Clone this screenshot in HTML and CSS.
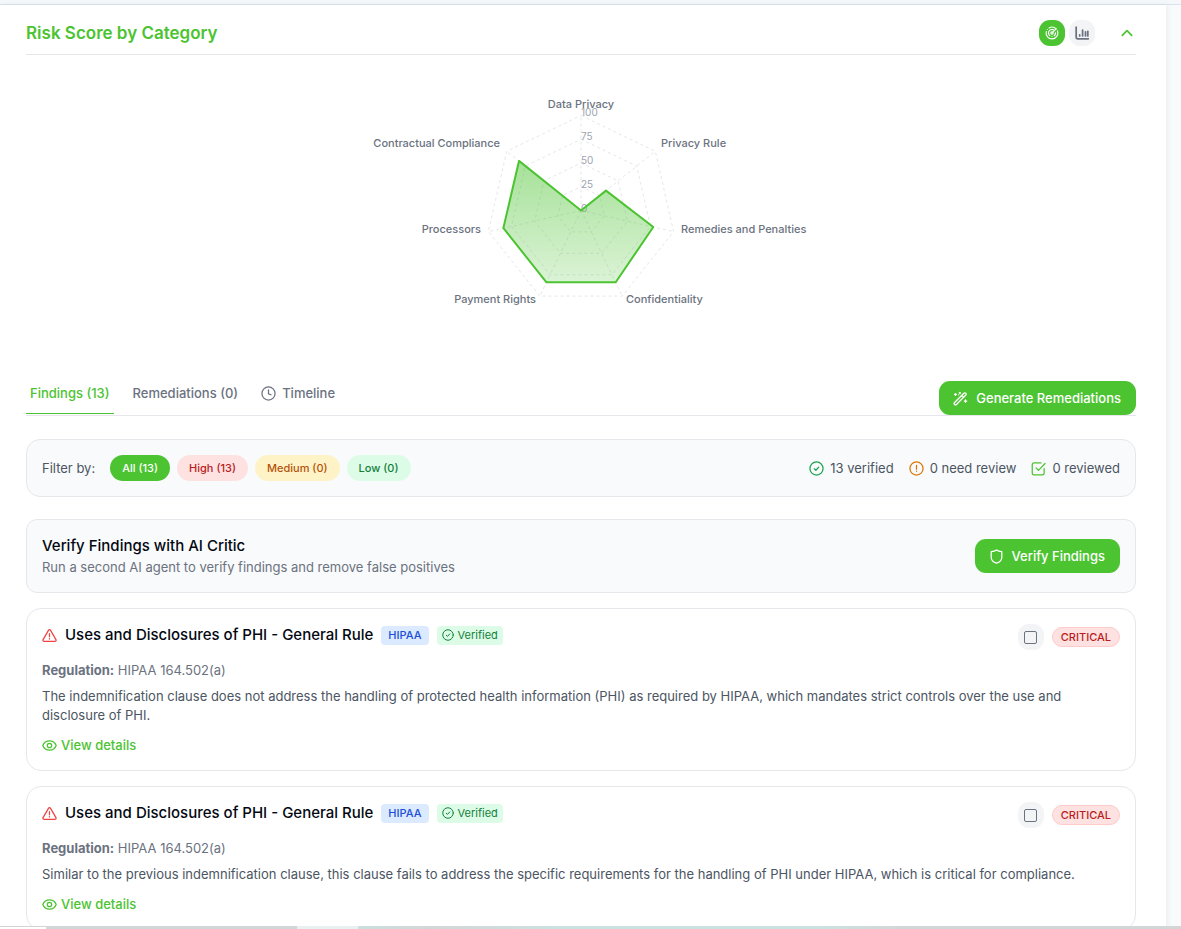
FILE: index.html
```html
<!DOCTYPE html>
<html lang="en">
<head>
<meta charset="utf-8">
<title>Risk Score by Category</title>
<link rel="stylesheet" href="styles.css">
</head>
<body>
<svg class="sprite" aria-hidden="true">
  <symbol id="check-circle" viewBox="0 0 24 24"><circle cx="12" cy="12" r="10.500"/><path d="m8.500 12.500 2.500 2.300 4.500-5"/></symbol>
  <symbol id="warning" viewBox="0 0 24 24"><path d="M10.300 3.700 1.700 18.500A2 2 0 0 0 3.400 21.500h17.200a2 2 0 0 0 1.700-3L13.700 3.700a2 2 0 0 0-3.400 0zM12 9v5M12 17v.5"/></symbol>
  <symbol id="eye" viewBox="0 0 24 24"><path d="M1.300 12C3 7.500 7 4.500 12 4.500S21 7.500 22.700 12C21 16.500 17 19.500 12 19.500S3 16.500 1.300 12z"/><circle cx="12" cy="12" r="3.500"/></symbol>
</svg>
<header class="topbar"></header>
<main class="panel">
  <section>
    <div class="section-head">
      <h2>Risk Score by Category</h2>
      <div class="head-actions">
        <button class="round active" aria-label="Radar chart"><svg class="i14" viewBox="0 0 24 24"><path d="M19.070 4.930A10 10 0 0 0 6.990 3.340M4 6h.010M2.290 9.620a10 10 0 1 0 19.020-1.270M16.240 7.760a6 6 0 1 0-8.010 8.910M12 18h.010M17.990 11.660a6 6 0 0 1-2.220 5.010"/><circle cx="12" cy="12" r="2"/><path d="m13.410 10.590 5.660-5.660"/></svg></button>
        <button class="round" aria-label="Bar chart"><svg class="i14 bold" viewBox="0 0 24 24"><path d="M2 2v17a3 3 0 0 0 3 3h18M8 17v-2M13 17V7M18 17v-7M22 17V9"/></svg></button>
        <button class="collapse" aria-label="Collapse"><svg class="i14 bold" viewBox="0 0 24 24"><path d="m4 16 8-8 8 8"/></svg></button>
      </div>
    </div>
    <svg class="radar" viewBox="0 0 480 260" role="img" aria-label="Risk score by category">
      <defs><linearGradient id="fill" x1="0" y1="0" x2="0" y2="1"><stop offset="0" stop-color="#4cc331" stop-opacity=".5"/><stop offset="1" stop-color="#4cc331" stop-opacity=".2"/></linearGradient></defs>
      <g transform="translate(240 130.500)">
        <g class="grid">
          <path d="M0-95 74.300-59.200 92.600 21.100 41.200 85.600H-41.200L-92.600 21.100-74.300-59.200Z"/>
          <path d="M0-71.300 55.700-44.400 69.500 15.900 30.900 64.200H-30.900L-69.500 15.900-55.700-44.400Z"/>
          <path d="M0-47.500 37.100-29.600 46.300 10.600 20.600 42.800H-20.600L-46.300 10.600-37.100-29.600Z"/>
          <path d="M0-23.800 18.600-14.800 23.200 5.300 10.300 21.400H-10.300L-23.200 5.300-18.600-14.800Z"/>
          <path d="M0 0V-95M0 0 74.300-59.200M0 0 92.600 21.100M0 0 41.200 85.600M0 0-41.200 85.600M0 0-92.600 21.100M0 0-74.300-59.200"/>
        </g>
        <g class="ticks"><text x="0" y="-95">100</text><text x="0" y="-71">75</text><text x="0" y="-47">50</text><text x="0" y="-23">25</text><text x="0" y="1">0</text></g>
        <path class="area" d="M0 0 25-19.900 72.300 16.500 34.700 71.700H-34.700L-77.600 17.600-62-49.600Z"/>
        <g class="cats">
          <text x="0" y="-103" text-anchor="middle">Data Privacy</text>
          <text x="80" y="-64">Privacy Rule</text>
          <text x="100" y="22">Remedies and Penalties</text>
          <text x="45" y="92">Confidentiality</text>
          <text x="-45" y="92" text-anchor="end">Payment Rights</text>
          <text x="-100" y="22" text-anchor="end">Processors</text>
          <text x="-81" y="-64" text-anchor="end">Contractual Compliance</text>
        </g>
      </g>
    </svg>
  </section>

  <nav class="tabs">
    <button class="tab selected">Findings (13)</button>
    <button class="tab">Remediations (0)</button>
    <button class="tab"><svg class="i15" viewBox="0 0 24 24"><circle cx="12" cy="12" r="10.500"/><path d="M12 6v6.500l4 1.500"/></svg>Timeline</button>
    <button class="primary generate"><svg class="i15" viewBox="0 0 24 24"><path d="m2.500 18.500 15-15a2 2 0 0 1 3 3l-15 15a2 2 0 0 1-3-3zM14 7l3 3M11 2v2M10 3h2M4 4v3M2.500 5.500h3M20 14v4M18 16h4M9 6v.1"/></svg>Generate Remediations</button>
  </nav>

  <section class="box filter">
    <span class="filter-label">Filter by:</span>
    <button class="chip all">All (13)</button>
    <button class="chip high">High (13)</button>
    <button class="chip medium">Medium (0)</button>
    <button class="chip low">Low (0)</button>
    <div class="stats">
      <span><svg class="i15 verified-ico"><use href="#check-circle"/></svg>13 verified</span>
      <span><svg class="i15 review-ico" viewBox="0 0 24 24"><circle cx="12" cy="12" r="10.500"/><path d="M12 7v6M12 16v.5"/></svg>0 need review</span>
      <span><svg class="i15 done-ico" viewBox="0 0 24 24"><path d="M16 3H5a3 3 0 0 0-3 3v13a3 3 0 0 0 3 3h13a3 3 0 0 0 3-3v-7M8 11l4 4L22.500 4"/></svg>0 reviewed</span>
    </div>
  </section>

  <section class="box critic">
    <div>
      <h3>Verify Findings with AI Critic</h3>
      <p>Run a second AI agent to verify findings and remove false positives</p>
    </div>
    <button class="primary"><svg class="i15" viewBox="0 0 24 24"><path d="M12 1.500c2.500 2 5 2.500 8.500 2.800V13c0 5-3.500 8-8.500 9.500C7 21 3.500 18 3.500 13V4.300C7 4 9.500 3.500 12 1.500z"/></svg>Verify Findings</button>
  </section>

  <article class="finding">
    <div class="finding-head">
      <div class="finding-title">
        <svg class="i15 alert"><use href="#warning"/></svg>
        <h3>Uses and Disclosures of PHI - General Rule</h3>
        <span class="tag hipaa">HIPAA</span>
        <span class="tag verified"><svg class="i12"><use href="#check-circle"/></svg>Verified</span>
      </div>
      <div class="finding-state">
        <label class="pick"><input type="checkbox" aria-label="Mark finding as reviewed"></label>
        <span class="severity">CRITICAL</span>
      </div>
    </div>
    <p class="regulation"><strong>Regulation:</strong> HIPAA 164.502(a)</p>
    <p class="detail">The indemnification clause does not address the handling of protected health information (PHI) as required by HIPAA, which mandates strict controls over the use and disclosure of PHI.</p>
    <a class="view" href="#details"><svg class="i15"><use href="#eye"/></svg>View details</a>
  </article>

  <article class="finding">
    <div class="finding-head">
      <div class="finding-title">
        <svg class="i15 alert"><use href="#warning"/></svg>
        <h3>Uses and Disclosures of PHI - General Rule</h3>
        <span class="tag hipaa">HIPAA</span>
        <span class="tag verified"><svg class="i12"><use href="#check-circle"/></svg>Verified</span>
      </div>
      <div class="finding-state">
        <label class="pick"><input type="checkbox" aria-label="Mark finding as reviewed"></label>
        <span class="severity">CRITICAL</span>
      </div>
    </div>
    <p class="regulation"><strong>Regulation:</strong> HIPAA 164.502(a)</p>
    <p class="detail">Similar to the previous indemnification clause, this clause fails to address the specific requirements for the handling of PHI under HIPAA, which is critical for compliance.</p>
    <a class="view" href="#details"><svg class="i15"><use href="#eye"/></svg>View details</a>
  </article>
</main>
<footer class="dock"><span class="dock-tab"></span></footer>
</body>
</html>
```

FILE: styles.css
```css
* { box-sizing: border-box; }
body { margin: 0; height: 100vh; overflow: hidden; background: #f8fafc; color: #4b5563; font: 13px/20px Inter, "Liberation Sans", sans-serif; }
h2, h3, p { margin: 0; }
button { border: 0; padding: 0; background: none; color: inherit; font: inherit; cursor: pointer; }
svg { fill: none; stroke: currentColor; stroke-width: 2; stroke-linecap: round; stroke-linejoin: round; flex: none; }
.sprite { position: absolute; width: 0; height: 0; }
.i12 { width: 12px; height: 12px; }
.i14 { width: 14px; height: 14px; }
.i15 { width: 15px; height: 15px; }
.bold { stroke-width: 3; }

.topbar { height: 5px; background: #f5f8fb; border-bottom: 1px solid #dae2ea; }
.panel { margin-right: 15px; padding: 8px 30px 16px 26px; background: #fff; box-shadow: 2px 0 6px #0000000d; }

.section-head { display: flex; justify-content: space-between; align-items: center; height: 42px; padding-bottom: 2px; border-bottom: 1px solid #e5e7eb; }
.section-head h2 { color: #4cc331; font-size: 17px; line-height: 24px; font-weight: 600; }
.head-actions { display: flex; align-items: center; gap: 4px; }
.round { display: grid; place-items: center; width: 26px; height: 26px; border-radius: 11px; background: #f3f4f6; color: #6b7280; }
.round.active { background: #4cc331; color: #fff; }
.collapse { display: grid; place-items: center; margin-left: 19px; width: 18px; height: 18px; color: #4cc331; }

.radar { display: block; width: 480px; max-width: 100%; height: 260px; margin: 25px auto 41px; }
.grid { stroke: #e5e7eb; stroke-width: 1; stroke-dasharray: 3 3; stroke-linecap: butt; }
.area { fill: url(#fill); stroke: #4cc331; }
.ticks, .cats { stroke: none; font-size: 11px; }
.ticks { fill: #9ca3af; font-size: 10px; }
.cats { fill: #6b7280; font-weight: 500; }

.tabs { display: flex; align-items: flex-start; gap: 15px; margin-bottom: 23px; border-bottom: 1px solid #e5e7eb; color: #6b7280; font-weight: 500; }
.tab { display: flex; align-items: center; gap: 6px; height: 33px; padding: 2px 4px 10px; border-bottom: 1px solid transparent; }
.tab.selected { color: #4cc331; border-color: #4cc331; }
.primary { display: flex; align-items: center; gap: 8px; height: 34px; padding: 0 15px 0 14px; border-radius: 11px; background: #4cc331; color: #fff; font-weight: 500; }
.generate { margin-left: auto; }

.box { display: flex; align-items: center; padding: 15px; border: 1px solid #e5e7eb; border-radius: 14px; background: #f9fafb; }
.filter { gap: 7px; margin-bottom: 22px; }
.filter-label { margin-right: 8px; }
.chip { padding: 3px 12px; border-radius: 13px; font-size: 11px; font-weight: 500; }
.all { background: #4cc331; color: #fff; }
.high { background: #fee2e2; color: #b91c1c; }
.medium { background: #fef3c7; color: #b45309; }
.low { background: #dcfce7; color: #15803d; }
.stats { display: flex; gap: 15px; margin-left: auto; }
.stats span { display: flex; align-items: center; gap: 6px; }
.verified-ico { color: #16a34a; }
.review-ico { color: #d97706; }
.done-ico { color: #4cc331; }

.critic { justify-content: space-between; min-height: 74px; margin-bottom: 15px; border-radius: 11px; color: #6b7280; }
h3 { color: #030712; font-size: 15px; line-height: 22px; font-weight: 500; }

.finding { margin-bottom: 15px; padding: 15px; border: 1px solid #e5e7eb; border-radius: 15px; }
.finding-head { display: flex; justify-content: space-between; align-items: flex-start; margin-bottom: 10px; }
.finding-title, .finding-state { display: flex; align-items: center; gap: 8px; }
.alert { color: #ef4444; }
.tag { display: flex; align-items: center; gap: 4px; height: 19px; padding: 0 7px; border-radius: 4px; font-size: 11px; }
.hipaa { background: #dbeafe; color: #1d4ed8; font-weight: 500; }
.verified { padding: 0 5px; background: #dcfce7; color: #15803d; }
.pick { display: grid; place-items: center; width: 26px; height: 26px; border-radius: 11px; background: #f3f4f6; }
.pick input { appearance: none; width: 13px; height: 13px; margin: 0; border: 1px solid #6b7280; border-radius: 2px; }
.severity { padding: 0 8px; border: 1px solid #fecaca; border-radius: 10px; background: #fee2e2; color: #b91c1c; font-size: 11px; line-height: 18px; font-weight: 500; }
.regulation { margin-bottom: 7px; color: #6b7280; }
.detail { line-height: 19px; margin-bottom: 10px; }
.view { display: flex; align-items: center; gap: 4px; width: max-content; color: #4cc331; font-weight: 500; text-decoration: none; }

.dock { position: fixed; inset: auto 0 0; height: 3px; background: linear-gradient(90deg, #d3d6d6 0 297px, #e9f1f0 297px 358px, #c8e0de 358px, #d3d6d6 430px, #cae2e0 560px 820px, #d3d6d6 900px); }
.dock-tab { display: block; width: 46px; height: 3px; border-top: 1px solid #d3d3d3; background: #fff; }
```
